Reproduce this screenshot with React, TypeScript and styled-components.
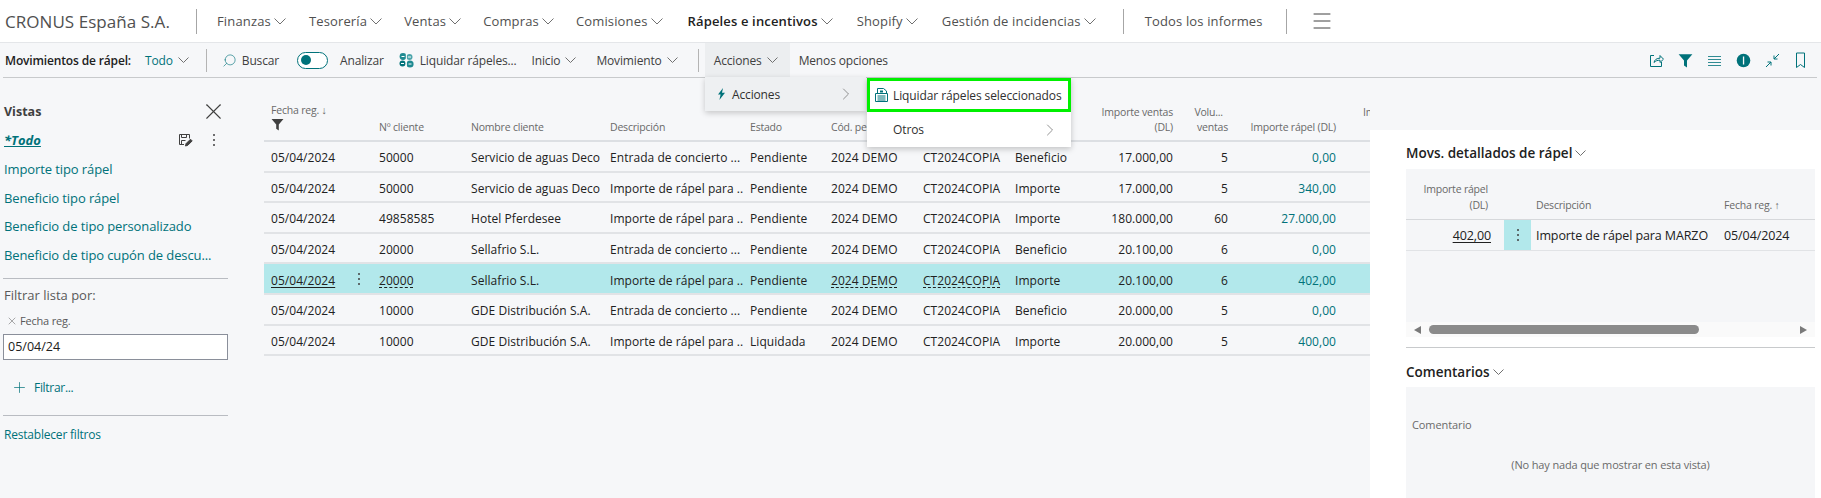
import styled, { createGlobalStyle } from "styled-components";
import { ChevronRight, Search, X, Plus, Menu } from "lucide-react";

const GlobalStyle = createGlobalStyle`
  html, body {
    margin: 0;
    padding: 0;
    height: 100%;
    overflow: hidden;
    background: #ffffff;
    font-family: "Open Sans", "Noto Sans", sans-serif;
    color: #212121;
  }
`;

const teal = "#00727a";

const Page = styled.div`
  width: 1821px;
  height: 498px;
  display: flex;
  flex-direction: column;
  background: #f6f7f9;
  position: relative;
  overflow: hidden;
`;

const NavBar = styled.nav`
  height: 42px;
  flex: none;
  display: flex;
  align-items: center;
  background: #ffffff;
  border-bottom: 1px solid #e4e6e9;
  padding-left: 5px;
`;

const Company = styled.div`
  font-size: 17px;
  color: #505050;
  width: 191px;
  flex: none;
  letter-spacing: 0.05px;
`;

const NavDivider = styled.span`
  width: 1px;
  height: 25px;
  background: #a6a6a6;
  flex: none;
`;

const NavItem = styled.div<{ $left: number; $active?: boolean }>`
  margin-left: ${({ $left }) => $left}px;
  display: flex;
  align-items: center;
  gap: 3px;
  font-size: 13px;
  letter-spacing: 0.15px;
  font-weight: ${({ $active }) => ($active ? 600 : 400)};
  color: ${({ $active }) => ($active ? "#212121" : "#505050")};
  white-space: nowrap;
  flex: none;
`;

const ToolBar = styled.div`
  height: 34px;
  flex: none;
  margin: 0 4px 0 3px;
  display: flex;
  align-items: center;
  border-bottom: 1px solid #c8cacc;
  padding-left: 2px;
  font-size: 12px;
  letter-spacing: -0.15px;
  color: #404040;
`;

const ToolTitle = styled.span`
  font-weight: 600;
  color: #212121;
  flex: none;
`;

const ToolItem = styled.div<{ $left: number; $open?: boolean; $teal?: boolean }>`
  margin-left: ${({ $left }) => $left}px;
  display: flex;
  align-items: center;
  gap: 5px;
  height: 100%;
  white-space: nowrap;
  flex: none;
  color: ${({ $teal }) => ($teal ? teal : "inherit")};
  background: ${({ $open }) => ($open ? "#eceef0" : "transparent")};
  padding: ${({ $open }) => ($open ? "0 12px 0 9px" : "0")};
`;

const ToolDivider = styled.span<{ $left: number }>`
  margin-left: ${({ $left }) => $left}px;
  width: 1px;
  height: 23px;
  background: #b4b4b4;
  flex: none;
`;

const Toggle = styled.span`
  width: 31px;
  height: 17px;
  box-sizing: border-box;
  border: 1px solid ${teal};
  border-radius: 9px;
  display: flex;
  align-items: center;
  padding-left: 3px;
  margin-right: 7px;
  background: #ffffff;
  &::before {
    content: "";
    width: 10px;
    height: 10px;
    border-radius: 50%;
    background: ${teal};
  }
`;

const RightIcons = styled.div`
  margin-left: auto;
  margin-right: 10px;
  display: flex;
  align-items: center;
  gap: 14px;
  color: ${teal};
`;

const Body = styled.div`
  flex: 1;
  min-height: 0;
  display: flex;
`;

const Sidebar = styled.aside`
  width: 225px;
  margin-left: 3px;
  flex: none;
  display: flex;
  flex-direction: column;
  font-size: 13px;
`;

const ViewsHead = styled.div`
  display: flex;
  align-items: center;
  justify-content: space-between;
  margin-top: 24px;
  height: 18px;
  padding-left: 1px;
  font-weight: 700;
  font-size: 12.5px;
  color: #404040;
`;

const ViewRow = styled.div`
  display: flex;
  align-items: center;
  justify-content: space-between;
  margin-top: 10px;
  height: 20px;
  padding-left: 1px;
`;

const ActiveView = styled.a`
  color: ${teal};
  font-weight: 700;
  font-style: italic;
  text-decoration: underline;
`;

const RowIcons = styled.span`
  display: flex;
  align-items: center;
  gap: 19px;
  color: #404040;
  margin-right: 12px;
`;

const CloseIcon = styled.span`
  display: flex;
  color: #404040;
  margin-right: 1px;
`;

const ViewLink = styled.a`
  display: block;
  height: 28.6px;
  line-height: 28.6px;
  padding-left: 1px;
  color: ${teal};
  letter-spacing: -0.1px;
  white-space: nowrap;
`;

const ViewList = styled.div`
  margin-top: 5px;
`;

const SideDivider = styled.div<{ $top: number }>`
  height: 1px;
  background: #b9bcc2;
  margin-top: ${({ $top }) => $top}px;
`;

const FilterLabel = styled.div`
  margin-top: 7px;
  padding-left: 1px;
  color: #595959;
  line-height: 18px;
`;

const FilterField = styled.div`
  margin-top: 10px;
  display: flex;
  align-items: center;
  gap: 2px;
  padding-left: 3px;
  font-size: 11px;
  color: #595959;
  line-height: 14px;
  letter-spacing: -0.2px;
`;

const DateInput = styled.div`
  margin-top: 6px;
  height: 26px;
  box-sizing: border-box;
  border: 1px solid #8a8f9a;
  background: #ffffff;
  padding-left: 4px;
  line-height: 24px;
  font-size: 12.5px;
  color: #212121;
`;

const AddFilter = styled.div`
  margin-top: 16px;
  padding-left: 8px;
  height: 22px;
  display: flex;
  align-items: center;
  gap: 6px;
  font-size: 12px;
  letter-spacing: -0.3px;
  color: ${teal};
`;

const ResetLink = styled.a`
  margin-top: 10px;
  padding-left: 1px;
  line-height: 18px;
  font-size: 12px;
  letter-spacing: -0.2px;
  color: ${teal};
`;

const ListArea = styled.main`
  width: 1106px;
  margin-left: 36px;
  flex: none;
  overflow: hidden;
`;

const ListGrid = styled.div`
  width: 1200px;
  margin-top: 9px;
`;

const mainColumns = "82px 26px 92px 139px 140px 81px 92px 92px 70px 99px 55px 108px 16px 96px";

const HeadRow = styled.div`
  display: grid;
  grid-template-columns: ${mainColumns};
  height: 55px;
  border-bottom: 2px solid #dcdfe3;
  box-sizing: border-box;
  font-size: 10.5px;
  color: #696969;
  letter-spacing: -0.2px;
`;

const HeadCell = styled.div<{ $right?: boolean }>`
  align-self: end;
  padding: 0 ${({ $right }) => ($right ? "4px" : "0")} 5px 7px;
  text-align: ${({ $right }) => ($right ? "right" : "left")};
  line-height: 15px;
  white-space: nowrap;
`;

const DataRow = styled.div<{ $selected?: boolean }>`
  display: grid;
  grid-template-columns: ${mainColumns};
  align-items: center;
  height: 30.6px;
  box-sizing: border-box;
  border-bottom: 2px solid #e1e3e6;
  font-size: 12px;
  letter-spacing: 0.05px;
  color: #212121;
  background: ${({ $selected }) => ($selected ? "#b2e8eb" : "transparent")};
`;

const Cell = styled.div<{ $right?: boolean; $link?: boolean; $under?: "solid" | "dashed" }>`
  padding: 3px ${({ $right }) => ($right ? "4px" : "0")} 0 7px;
  text-align: ${({ $right }) => ($right ? "right" : "left")};
  color: ${({ $link }) => ($link ? teal : "inherit")};
  white-space: nowrap;
  overflow: hidden;
  text-decoration: ${({ $under }) => ($under ? `underline ${$under}` : "none")};
  text-underline-offset: 2px;
`;

const DotsCell = styled.div`
  display: flex;
  justify-content: center;
  color: #404040;
`;

const FactBox = styled.aside`
  width: 409px;
  margin-top: 52px;
  flex: none;
  background: #ffffff;
  padding: 14px 27px 0 36px;
  box-sizing: content-box;
`;

const PartTitle = styled.div`
  display: flex;
  align-items: center;
  gap: 3px;
  height: 18px;
  font-size: 13.5px;
  font-weight: 600;
  color: #212121;
`;

const PartBox = styled.div`
  margin-top: 7px;
  background: #f5f6f8;
  overflow: hidden;
`;

const subColumns = "98px 27px 193px 90px";

const SubHead = styled.div`
  display: grid;
  grid-template-columns: ${subColumns};
  height: 50px;
  border-bottom: 1px solid #d6d8db;
  font-size: 10.5px;
  letter-spacing: -0.2px;
  color: #696969;
  box-sizing: content-box;
`;

const SubHeadCell = styled.div<{ $right?: boolean; $pad?: boolean }>`
  align-self: end;
  line-height: 16px;
  padding-bottom: 6px;
  text-align: ${({ $right }) => ($right ? "right" : "left")};
  padding-right: ${({ $right }) => ($right ? "16px" : "0")};
  padding-left: ${({ $pad }) => ($pad ? "5px" : "0")};
  white-space: nowrap;
`;

const SubRow = styled.div`
  display: grid;
  grid-template-columns: ${subColumns};
  height: 30px;
  align-items: center;
  border-bottom: 1px solid #e1e3e6;
  font-size: 12.5px;
  letter-spacing: -0.1px;
  color: #212121;
  white-space: nowrap;
`;

const SubAmount = styled.div`
  text-align: right;
  padding-right: 13px;
  text-decoration: underline;
  text-underline-offset: 2px;
`;

const SubDots = styled.div`
  height: 100%;
  background: #b2e8eb;
  display: flex;
  align-items: center;
  justify-content: center;
  color: #404040;
`;

const SubText = styled.div`
  padding-left: 5px;
`;

const SubSpacer = styled.div`
  height: 71px;
`;

const ScrollBar = styled.div`
  height: 15px;
  background: #fafafa;
  display: flex;
  align-items: center;
  padding: 0 8px;
  gap: 8px;
`;

const Thumb = styled.span`
  width: 270px;
  height: 9px;
  background: #8b8b8b;
  border-radius: 5px;
  flex: none;
`;

const ScrollArrow = styled.span<{ $dir: "left" | "right" }>`
  width: 0;
  height: 0;
  border-top: 4px solid transparent;
  border-bottom: 4px solid transparent;
  border-${({ $dir }) => ($dir === "left" ? "right" : "left")}: 7px solid #7a7a7a;
  margin-left: ${({ $dir }) => ($dir === "right" ? "auto" : "0")};
`;

const PartDivider = styled.div`
  height: 1px;
  background: #c8cacc;
  margin: 10px 0 15px;
`;

const CommentBox = styled.div`
  margin-top: 6px;
  height: 120px;
  background: #f5f6f8;
  font-size: 11px;
  color: #6a6a6a;
`;

const CommentHead = styled.div`
  padding: 30px 0 0 6px;
  line-height: 16px;
  letter-spacing: -0.1px;
`;

const EmptyText = styled.div`
  margin-top: 24px;
  text-align: center;
  line-height: 16px;
  letter-spacing: -0.15px;
`;

const MenuPanel = styled.div`
  position: absolute;
  left: 705px;
  top: 77px;
  width: 161px;
  height: 34px;
  background: #eef0f2;
  box-shadow: 0 2px 6px rgba(0, 0, 0, 0.2);
  display: flex;
  align-items: center;
  font-size: 12px;
  letter-spacing: -0.15px;
  color: #303030;
  padding: 0 10px 0 12px;
  box-sizing: border-box;
  gap: 6px;
`;

const SubMenu = styled.div`
  position: absolute;
  left: 867px;
  top: 78px;
  width: 204px;
  background: #ffffff;
  box-shadow: 0 2px 6px rgba(0, 0, 0, 0.22);
  font-size: 12px;
  letter-spacing: -0.1px;
  color: #303030;
`;

const SubMenuItem = styled.div<{ $focused?: boolean }>`
  height: ${({ $focused }) => ($focused ? "34px" : "35px")};
  box-sizing: border-box;
  display: flex;
  align-items: center;
  gap: 3px;
  padding: 0 11px 0 ${({ $focused }) => ($focused ? "4px" : "26px")};
  border: ${({ $focused }) => ($focused ? "3px solid #00f000" : "none")};
  white-space: nowrap;
`;

const PushRight = styled.span`
  margin-left: auto;
  display: flex;
  color: #7d7d7d;
`;

const ChevronGlyph = styled.svg`
  flex: none;
  fill: none;
  stroke: #707070;
  stroke-width: 1;
`;

const Chevron = ({ width = 11 }: { width?: number }) => (
  <ChevronGlyph width={width} height={Math.ceil(width / 2) + 1} viewBox={`0 0 ${width} ${Math.ceil(width / 2) + 1}`}>
    <path d={`M0.5 0.5L${width / 2} ${width / 2}L${width - 0.5} 0.5`} />
  </ChevronGlyph>
);

const Dots = () => (
  <svg width="4" height="14" viewBox="0 0 4 14" fill="currentColor" style={{ flex: "none" }}>
    <circle cx="2" cy="2" r="1" />
    <circle cx="2" cy="7" r="1" />
    <circle cx="2" cy="12" r="1" />
  </svg>
);

const SettleDocIcon = () => (
  <svg width="16" height="16" viewBox="0 0 16 16" fill="none" stroke={teal} strokeWidth="1" style={{ flex: "none" }}>
    <path d="M1.5 6.5h12v8h-12z" />
    <path d="M3.5 6.5v-5h6l3 2.5v2.5" />
    <path d="M3.5 9h8M3.5 11h8M3.5 13h8" />
    <path d="M6 3.5h3v2H6z" fill={teal} stroke="none" />
  </svg>
);

const SettleBatchIcon = () => (
  <svg width="17" height="17" viewBox="0 0 17 17" style={{ flex: "none" }}>
    <circle cx="5" cy="4.5" r="3.4" fill="#1f8a91" />
    <circle cx="11.5" cy="5" r="3" fill="#4da5ab" />
    <circle cx="4.5" cy="11.5" r="3" fill="#00727a" />
    <circle cx="12" cy="12" r="3.6" fill="#1f8a91" />
    <path d="M3.5 4.5h3M10 5h3M3 11.5h3M10.5 12h3M8.3 2v13" stroke="#ffffff" strokeWidth="1" />
  </svg>
);

const FunnelIcon = ({ size = 12, color = "#404040" }: { size?: number; color?: string }) => (
  <svg width={size} height={size} viewBox="0 0 12 12" fill={color}>
    <path d="M0.5 1h11L7.2 6v5.5L4.8 10V6z" />
  </svg>
);

const BoltIcon = () => (
  <svg width="9" height="12" viewBox="0 0 9 12" fill={teal}>
    <path d="M6 0L1 6.5h2.6L2.4 12 8 4.8H5z" />
  </svg>
);

const EditViewIcon = () => (
  <svg width="15" height="15" viewBox="0 0 15 15" fill="none" stroke="#404040" strokeWidth="1">
    <path d="M1.5 1.5h10v4M1.5 1.5v10h4.5" />
    <path d="M3.5 1.5v3h5v-3M3.5 11v-3.5h4" />
    <path d="M7.5 13l.6-2.4 4.4-4.4 1.7 1.7-4.4 4.4z" fill="#404040" />
  </svg>
);

const ShareIcon = () => (
  <svg width="15" height="15" viewBox="0 0 15 15" fill="none" stroke={teal} strokeWidth="1">
    <path d="M5 2.5H1.5v11h11V9" />
    <path d="M5 9.5c.5-3 3-4.3 6-4.3V2.5l3.5 3.7L11 9.5V7.2c-2.5 0-4.6.6-6 2.3z" />
  </svg>
);

const ListIcon = () => (
  <svg width="15" height="15" viewBox="0 0 15 15" stroke={teal} strokeWidth="1" opacity="0.8">
    <path d="M1 3.5h13M1 6.5h13M1 9.5h13M1 12.5h13" />
  </svg>
);

const InfoIcon = () => (
  <svg width="15" height="15" viewBox="0 0 15 15">
    <circle cx="7.5" cy="7.5" r="6.8" fill={teal} />
    <rect x="6.9" y="3.5" width="1.3" height="8" fill="#f6f7f9" />
  </svg>
);

const CollapseIcon = () => (
  <svg width="15" height="15" viewBox="0 0 15 15" fill="none" stroke={teal} strokeWidth="1">
    <path d="M14 1L9 6M9 2.5V6h3.5M1 14l5-5M2.5 9H6v3.5" />
  </svg>
);

const BookmarkIcon = () => (
  <svg width="13" height="17" viewBox="0 0 13 17" fill="none" stroke={teal} strokeWidth="1">
    <path d="M2.5 1h8v14.5l-4-3-4 3z" />
  </svg>
);

const navItems = [
  { label: "Finanzas", left: 20 },
  { label: "Tesorería", left: 23 },
  { label: "Ventas", left: 22 },
  { label: "Compras", left: 22 },
  { label: "Comisiones", left: 22 },
  { label: "Rápeles e incentivos", left: 25, active: true },
  { label: "Shopify", left: 24 },
  { label: "Gestión de incidencias", left: 24 },
];

const rows = [
  { no: "50000", name: "Servicio de aguas Deco", desc: "Entrada de concierto ...", status: "Pendiente", type: "Beneficio", sales: "17.000,00", vol: "5", amount: "0,00" },
  { no: "50000", name: "Servicio de aguas Deco", desc: "Importe de rápel para ...", status: "Pendiente", type: "Importe", sales: "17.000,00", vol: "5", amount: "340,00" },
  { no: "49858585", name: "Hotel Pferdesee", desc: "Importe de rápel para ...", status: "Pendiente", type: "Importe", sales: "180.000,00", vol: "60", amount: "27.000,00" },
  { no: "20000", name: "Sellafrio S.L.", desc: "Entrada de concierto ...", status: "Pendiente", type: "Beneficio", sales: "20.100,00", vol: "6", amount: "0,00" },
  { no: "20000", name: "Sellafrio S.L.", desc: "Importe de rápel para ...", status: "Pendiente", type: "Importe", sales: "20.100,00", vol: "6", amount: "402,00", selected: true },
  { no: "10000", name: "GDE Distribución S.A.", desc: "Entrada de concierto ...", status: "Pendiente", type: "Beneficio", sales: "20.000,00", vol: "5", amount: "0,00" },
  { no: "10000", name: "GDE Distribución S.A.", desc: "Importe de rápel para ...", status: "Liquidada", type: "Importe", sales: "20.000,00", vol: "5", amount: "400,00" },
];

export default function App() {
  return (
    <Page>
      <GlobalStyle />
      <NavBar>
        <Company>CRONUS España S.A.</Company>
        <NavDivider />
        {navItems.map((item) => (
          <NavItem key={item.label} $left={item.left} $active={item.active}>
            {item.label}
            <Chevron width={12} />
          </NavItem>
        ))}
        <NavItem $left={27}>
          <NavDivider />
        </NavItem>
        <NavItem $left={21}>Todos los informes</NavItem>
        <NavItem $left={23}>
          <NavDivider />
        </NavItem>
        <NavItem $left={23}>
          <Menu size={24} strokeWidth={1} color="#404040" />
        </NavItem>
      </NavBar>
      <ToolBar>
        <ToolTitle>Movimientos de rápel:</ToolTitle>
        <ToolItem $left={14} $teal>
          Todo
          <Chevron />
        </ToolItem>
        <ToolDivider $left={17} />
        <ToolItem $left={15}>
          <Search size={15} strokeWidth={1} color={teal} style={{ transform: "scaleX(-1)" }} />
          Buscar
        </ToolItem>
        <ToolItem $left={18}>
          <Toggle />
          Analizar
        </ToolItem>
        <ToolItem $left={14}>
          <SettleBatchIcon />
          Liquidar rápeles...
        </ToolItem>
        <ToolItem $left={15}>
          Inicio
          <Chevron />
        </ToolItem>
        <ToolItem $left={20}>
          Movimiento
          <Chevron />
        </ToolItem>
        <ToolDivider $left={20} />
        <ToolItem $left={6} $open>
          Acciones
          <Chevron />
        </ToolItem>
        <ToolItem $left={9}>Menos opciones</ToolItem>
        <RightIcons>
          <ShareIcon />
          <FunnelIcon size={15} color={teal} />
          <ListIcon />
          <InfoIcon />
          <CollapseIcon />
          <BookmarkIcon />
        </RightIcons>
      </ToolBar>
      <Body>
        <Sidebar>
          <ViewsHead>
            Vistas
            <CloseIcon>
              <X size={27} strokeWidth={1} />
            </CloseIcon>
          </ViewsHead>
          <ViewRow>
            <ActiveView>*Todo</ActiveView>
            <RowIcons>
              <EditViewIcon />
              <Dots />
            </RowIcons>
          </ViewRow>
          <ViewList>
            <ViewLink>Importe tipo rápel</ViewLink>
            <ViewLink>Beneficio tipo rápel</ViewLink>
            <ViewLink>Beneficio de tipo personalizado</ViewLink>
            <ViewLink>Beneficio de tipo cupón de descu...</ViewLink>
          </ViewList>
          <SideDivider $top={9} />
          <FilterLabel>Filtrar lista por:</FilterLabel>
          <FilterField>
            <X size={12} strokeWidth={1} />
            Fecha reg.
          </FilterField>
          <DateInput>05/04/24</DateInput>
          <AddFilter>
            <Plus size={17} strokeWidth={1} color={teal} />
            Filtrar...
          </AddFilter>
          <SideDivider $top={17} />
          <ResetLink>Restablecer filtros</ResetLink>
        </Sidebar>
        <ListArea>
          <ListGrid>
            <HeadRow>
              <HeadCell>
                Fecha reg. ↓
                <br />
                <FunnelIcon size={13} />
              </HeadCell>
              <HeadCell />
              <HeadCell>Nº cliente</HeadCell>
              <HeadCell>Nombre cliente</HeadCell>
              <HeadCell>Descripción</HeadCell>
              <HeadCell>Estado</HeadCell>
              <HeadCell>Cód. período</HeadCell>
              <HeadCell>Cód. campaña</HeadCell>
              <HeadCell>Tipo</HeadCell>
              <HeadCell $right>
                Importe ventas
                <br />
                (DL)
              </HeadCell>
              <HeadCell $right>
                Volu...{"\u00a0\u00a0"}
                <br />
                ventas
              </HeadCell>
              <HeadCell $right>Importe rápel (DL)</HeadCell>
              <HeadCell />
              <HeadCell $right>
                Importe pendiente
                <br />
                (DL)
              </HeadCell>
            </HeadRow>
            {rows.map((row, idx) => (
              <DataRow key={idx} $selected={row.selected}>
                <Cell $under={row.selected ? "solid" : undefined}>05/04/2024</Cell>
                <DotsCell>{row.selected && <Dots />}</DotsCell>
                <Cell $under={row.selected ? "dashed" : undefined}>{row.no}</Cell>
                <Cell>{row.name}</Cell>
                <Cell>{row.desc}</Cell>
                <Cell>{row.status}</Cell>
                <Cell $under={row.selected ? "dashed" : undefined}>2024 DEMO</Cell>
                <Cell $under={row.selected ? "dashed" : undefined}>CT2024COPIA</Cell>
                <Cell>{row.type}</Cell>
                <Cell $right>{row.sales}</Cell>
                <Cell $right>{row.vol}</Cell>
                <Cell $right $link>
                  {row.amount}
                </Cell>
              </DataRow>
            ))}
          </ListGrid>
        </ListArea>
        <FactBox>
          <PartTitle>
            Movs. detallados de rápel
            <Chevron />
          </PartTitle>
          <PartBox>
            <SubHead>
              <SubHeadCell $right>
                Importe rápel
                <br />
                (DL)
              </SubHeadCell>
              <SubHeadCell />
              <SubHeadCell $pad>Descripción</SubHeadCell>
              <SubHeadCell>Fecha reg. ↑</SubHeadCell>
            </SubHead>
            <SubRow>
              <SubAmount>402,00</SubAmount>
              <SubDots>
                <Dots />
              </SubDots>
              <SubText>Importe de rápel para MARZO</SubText>
              <div>05/04/2024</div>
            </SubRow>
            <SubSpacer />
          </PartBox>
          <ScrollBar>
            <ScrollArrow $dir="left" />
            <Thumb />
            <ScrollArrow $dir="right" />
          </ScrollBar>
          <PartDivider />
          <PartTitle>
            Comentarios
            <Chevron />
          </PartTitle>
          <CommentBox>
            <CommentHead>Comentario</CommentHead>
            <EmptyText>(No hay nada que mostrar en esta vista)</EmptyText>
          </CommentBox>
        </FactBox>
      </Body>
      <MenuPanel>
        <BoltIcon />
        Acciones
        <PushRight>
          <ChevronRight size={20} strokeWidth={1} />
        </PushRight>
      </MenuPanel>
      <SubMenu>
        <SubMenuItem $focused>
          <SettleDocIcon />
          Liquidar rápeles seleccionados
        </SubMenuItem>
        <SubMenuItem>
          Otros
          <PushRight>
            <ChevronRight size={20} strokeWidth={1} />
          </PushRight>
        </SubMenuItem>
      </SubMenu>
    </Page>
  );
}
